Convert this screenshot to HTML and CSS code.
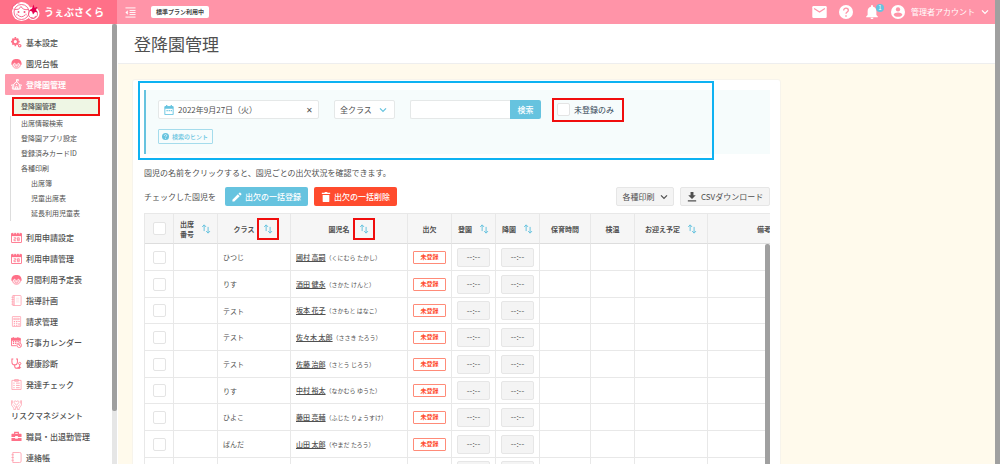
FILE: index.html
```html
<!DOCTYPE html>
<html lang="ja">
<head>
<meta charset="utf-8">
<meta name="viewport" content="width=device-width, initial-scale=1">
<title>登降園管理</title>
<link rel="stylesheet" href="styles.css">
</head>
<body>
<svg class="sprite" aria-hidden="true">
  <symbol id="i-gear" viewBox="0 0 24 24"><circle cx="9.500" cy="10" r="5.500" fill="none" stroke="currentColor" stroke-width="4"/><path d="M9.500 0v4M9.500 16v4M0 10h4M15 10h4M3 3.500l3 3M13 13.500l3 3M3 16.500l3-3M13 6.500l3-3" stroke="currentColor" stroke-width="3.500"/><circle cx="19" cy="19" r="2.700" fill="none" stroke="currentColor" stroke-width="2.600"/></symbol>
  <symbol id="i-child" viewBox="0 0 24 24"><path d="M1 12C1 5 6 2 12 2s11 3 11 10l1 2H0z" fill="currentColor"/><path d="M3 13c0 6 4 9.500 9 9.500s9-3.500 9-9.500l-5-3-4 3-4-3z" fill="#ffe3e8" stroke="currentColor" stroke-width="1.300"/><circle cx="8.500" cy="15" r="1.300" fill="currentColor"/><circle cx="15.500" cy="15" r="1.300" fill="currentColor"/><path d="M9 18.500q3 2 6 0" fill="none" stroke="currentColor" stroke-width="1.300"/></symbol>
  <symbol id="i-school" viewBox="0 0 24 24"><g fill="none" stroke="currentColor" stroke-width="2"><path d="M12 7V1h4v3h-4M6 11l6-5 6 5v11H6zM6 13H1l2 3v6h18v-6l2-3h-5M10 22v-5h4v5"/></g><circle cx="12" cy="12" r="1.500" fill="currentColor"/></symbol>
  <symbol id="i-cal" viewBox="0 0 24 24"><path d="M1 4q0-1 1-1h20q1 0 1 1v18q0 1-1 1H2q-1 0-1-1z" fill="none" stroke="currentColor" stroke-width="2"/><path d="M1 3h22v6H1z" fill="currentColor"/><path d="M6 0v5M12 0v5M18 0v5" stroke="#fff" stroke-width="1.500"/><path d="M6 12.500h4.500v3H6.500v3.500H11M14 12.500h4V19h-4zM14 15.700h4" fill="none" stroke="currentColor" stroke-width="1.600"/></symbol>
  <symbol id="i-book" viewBox="0 0 24 24"><path d="M4 1h16q2 0 2 2v18q0 2-2 2H4zM7 1v22M1 5h5M1 10h5M1 15h5M1 20h5" fill="none" stroke="currentColor" stroke-width="1.700"/><path d="M11 7h7M11 11h7M11 15h7" stroke="currentColor" stroke-width="1" opacity=".6"/></symbol>
  <symbol id="i-calc" viewBox="0 0 24 24"><rect x="3" y="1" width="18" height="22" rx="1" fill="none" stroke="currentColor" stroke-width="1.600"/><path d="M6 5h12v3H6z" fill="none" stroke="currentColor" stroke-width="1.500"/><path d="M6 12h3M11 12h3M16 12h3M6 16h3M11 16h3M6 20h3M11 20h3M17.500 15v6" stroke="currentColor" stroke-width="2.200"/></symbol>
  <symbol id="i-event" viewBox="0 0 24 24"><path d="M1 3h19v10M1 3v16h11" fill="none" stroke="currentColor" stroke-width="2"/><path d="M1 3h19v4H1zM5 0v4M15 0v4" fill="currentColor" stroke="currentColor" stroke-width="2"/><path d="M4 10h3M9 10h3M14 10h3M4 14h3M9 14h3" stroke="currentColor" stroke-width="2.500"/><circle cx="18" cy="18" r="5" fill="#fff" stroke="currentColor" stroke-width="1.800"/><path d="M15 15l6 6M18 15v3h3" fill="none" stroke="currentColor" stroke-width="1.500"/></symbol>
  <symbol id="i-steth" viewBox="0 0 24 24"><path d="M5 2H2v6c0 5 3 7 6 7s6-2 6-7V2h-3M8 15v3c0 6 11 6 11 0v-4" fill="none" stroke="currentColor" stroke-width="2.200"/><circle cx="19" cy="12" r="2.500" fill="none" stroke="currentColor" stroke-width="2"/><path d="M14 21h8M18 18v6" stroke="currentColor" stroke-width="2"/></symbol>
  <symbol id="i-check" viewBox="0 0 24 24"><path d="M2 3h20v20H2zM8 1h8v4H8z" fill="none" stroke="currentColor" stroke-width="1.700"/><path d="M5 9h3M5 14h3M5 19h3M11 9h8M11 14h8M11 19h8" stroke="currentColor" stroke-width="1.900"/></symbol>
  <symbol id="i-hands" viewBox="0 0 24 24"><path d="M12 13C5 9 6 4 9 4q2 0 3 2 1-2 3-2c3 0 4 5-3 9zM1 3v10l5 7v3h4v-5l-5-6M23 3v10l-5 7v3h-4v-5l5-6M3 3v7M21 3v7M12 15v4" fill="none" stroke="currentColor" stroke-width="1.500"/></symbol>
  <symbol id="i-case" viewBox="0 0 24 24"><path d="M8 7V3h8v4" fill="none" stroke="currentColor" stroke-width="2.500"/><path d="M2 6h20q1 0 1 1v6h-8v-2H9v2H1V7q0-1 1-1zM1 15h8v2h6v-2h8v6q0 1-1 1H2q-1 0-1-1z" fill="currentColor"/></symbol>
  <symbol id="i-note" viewBox="0 0 24 24"><path d="M4 1h15q3 0 3 3v16q0 3-3 3H4zM1 6h5M1 12h5M1 18h5" fill="none" stroke="currentColor" stroke-width="1.800"/></symbol>
  <symbol id="i-mail" viewBox="0 0 24 20"><rect width="24" height="20" rx="2" fill="currentColor"/><path d="M3 4l9 6 9-6" fill="none" stroke="#ff94a8" stroke-width="2"/></symbol>
  <symbol id="i-help" viewBox="0 0 24 24"><circle cx="12" cy="12" r="12" fill="currentColor"/><path class="cut" d="M8 9.500c0-6 8-5 8-.5 0 3-4 3-4 6" fill="none" stroke-width="2.300"/><path class="cut" d="M12 17.500v2.500" stroke-width="2.500"/></symbol>
  <symbol id="i-bell" viewBox="0 0 24 24"><path d="M12 24c1.500 0 2.500-1 2.500-2.300h-5C9.500 23 10.500 24 12 24zm7.500-7v-6.300c0-4-2-6.700-5.700-7.600V2.200C13.800 1 13 0 12 0s-1.800 1-1.800 2.200v.9c-3.600.9-5.700 3.700-5.700 7.600V17L2 19.500V21h20v-1.500z" fill="currentColor"/></symbol>
  <symbol id="i-user" viewBox="0 0 24 24"><circle cx="12" cy="12" r="12" fill="currentColor"/><circle cx="12" cy="7.500" r="3.700" fill="#ff94a8"/><path d="M4.500 16.500c1.500-5 13.500-5 15 0-3 5-12 5-15 0z" fill="#ff94a8"/></symbol>
  <symbol id="i-down" viewBox="0 0 24 24"><path d="M3 7l9 9 9-9" fill="none" stroke="currentColor" stroke-width="3.800"/></symbol>
  <symbol id="i-date" viewBox="0 0 24 24"><path d="M2 4h20v19H2z" fill="none" stroke="currentColor" stroke-width="2.200"/><path d="M2 3h20v6H2zM5 0h3v4H5zM16 0h3v4h-3zM6 12h3v3H6zM11 12h3v3h-3zM16 12h3v3h-3z" fill="currentColor"/></symbol>
  <symbol id="i-pen" viewBox="0 0 24 24"><path d="M1 18.500V23h4.500L18.500 10 14 5.500zM22.500 6c.6-.6.6-1.300 0-1.900l-2.600-2.600c-.6-.6-1.300-.6-1.900 0L15.500 4 20 8.500z" fill="currentColor"/></symbol>
  <symbol id="i-trash" viewBox="0 0 24 24"><path d="M4 7h16v15q0 2-2 2H6q-2 0-2-2zM2 2h6l1.500-2h5L16 2h6v3H2z" fill="currentColor"/></symbol>
  <symbol id="i-dl" viewBox="0 0 24 24"><path d="M8.500 0h7v8H21l-9 9-9-9h5.500zM2 20h20v3H2z" fill="currentColor"/></symbol>
  <symbol id="i-sort" viewBox="0 0 24 24"><path d="M7.500 17V3M3 7l4.500-5L12 7M17 7v14M12.500 17l4.500 5 4.500-5" fill="none" stroke="currentColor" stroke-width="2.400"/></symbol>
  <symbol id="i-menu" viewBox="0 0 24 24"><path d="M1 2h22M10 7.500h13M10 12h13M10 16.500h13M1 22h22" stroke="currentColor" stroke-width="2"/><path d="M6 7v10l-5-5z" fill="currentColor"/></symbol>
</svg>

<div class="app">
  <header class="topbar">
    <a class="logo" href="#">
      <svg class="logo-art" viewBox="0 0 60 42" aria-hidden="true">
        <circle cx="23" cy="20" r="19" fill="#fff"/><circle cx="46" cy="24" r="13" fill="#fff"/>
        <g fill="none" stroke="#f4547d" stroke-width="1.700"><circle cx="23" cy="21" r="15"/><path d="M10 16q8 2 12-6 4 8 15 6M6 16q-4-8 4-9 2-6 9-4M16 27q7 7 14 0M42 32q5 4 10-3"/><circle cx="46" cy="25" r="9"/></g>
        <circle cx="17" cy="21" r="2" fill="#f4547d"/><circle cx="29" cy="21" r="2" fill="#f4547d"/><circle cx="14" cy="26" r="2" fill="#ffacbc"/><circle cx="32" cy="26" r="2" fill="#ffacbc"/>
        <path d="M47 6l2 6 6-1-3 6 4 5-6-1-4 5-2-6-6-2 6-4z" fill="#e5004f"/>
      </svg>
      <span>うぇぶさくら</span>
    </a>
    <button class="icon-btn fold" aria-label="メニューを閉じる"><svg><use href="#i-menu"/></svg></button>
    <span class="plan">標準プラン利用中</span>
    <div class="tools">
      <button class="icon-btn mail" aria-label="メール"><svg><use href="#i-mail"/></svg></button>
      <button class="icon-btn" aria-label="ヘルプ"><svg><use href="#i-help"/></svg></button>
      <button class="icon-btn bell" aria-label="お知らせ"><svg><use href="#i-bell"/></svg><span class="count">1</span></button>
      <button class="account"><svg><use href="#i-user"/></svg><span>管理者アカウント</span><svg class="chev"><use href="#i-down"/></svg></button>
    </div>
  </header>

  <div class="body">
    <aside class="side">
      <nav class="nav">
        <a href="#"><svg><use href="#i-gear"/></svg>基本設定</a>
        <a href="#"><svg><use href="#i-child"/></svg>園児台帳</a>
        <a href="#" class="current"><svg><use href="#i-school"/></svg>登降園管理</a>
        <div class="sub">
          <a href="#" class="here marked">登降園管理</a>
          <a href="#">出席情報検索</a>
          <a href="#">登降園アプリ設定</a>
          <a href="#">登録済みカードID</a>
          <a href="#">各種印刷</a>
          <a href="#" class="deep">出席簿</a>
          <a href="#" class="deep">児童出席表</a>
          <a href="#" class="deep">延長利用児童表</a>
        </div>
        <a href="#"><svg><use href="#i-cal"/></svg>利用申請設定</a>
        <a href="#"><svg><use href="#i-cal"/></svg>利用申請管理</a>
        <a href="#"><svg><use href="#i-child"/></svg>月間利用予定表</a>
        <a href="#" class="pale"><svg><use href="#i-book"/></svg>指導計画</a>
        <a href="#" class="pale"><svg><use href="#i-calc"/></svg>請求管理</a>
        <a href="#"><svg><use href="#i-event"/></svg>行事カレンダー</a>
        <a href="#"><svg><use href="#i-steth"/></svg>健康診断</a>
        <a href="#" class="pale"><svg><use href="#i-check"/></svg>発達チェック</a>
        <a href="#" class="pale stacked"><svg><use href="#i-hands"/></svg>リスクマネジメント</a>
        <a href="#"><svg><use href="#i-case"/></svg>職員・出退勤管理</a>
        <a href="#" class="pale"><svg><use href="#i-note"/></svg>連絡帳</a>
      </nav>
      <div class="track"><div class="thumb"></div></div>
    </aside>

    <main class="main">
      <div class="heading"><h1>登降園管理</h1></div>
      <section class="card">
        <form class="filter">
          <div class="fields">
            <div class="date">
              <svg><use href="#i-date"/></svg>
              <input type="text" value="2022年9月27日（火）" aria-label="日付">
              <button type="button" aria-label="日付を消去">✕</button>
            </div>
            <div class="select">
              <select aria-label="クラス"><option>全クラス</option></select>
              <svg><use href="#i-down"/></svg>
            </div>
            <div class="search"><input type="text" aria-label="検索語"><button type="button">検索</button></div>
            <label class="only marked"><input type="checkbox"><span>未登録のみ</span></label>
          </div>
          <button type="button" class="hint"><svg><use href="#i-help"/></svg>検索のヒント</button>
        </form>
        <p class="lead">園児の名前をクリックすると、園児ごとの出欠状況を確認できます。</p>
        <div class="actions">
          <span>チェックした園児を</span>
          <button class="btn blue"><svg><use href="#i-pen"/></svg>出欠の一括登録</button>
          <button class="btn red"><svg><use href="#i-trash"/></svg>出欠の一括削除</button>
          <button class="btn gray push">各種印刷<svg class="chev"><use href="#i-down"/></svg></button>
          <button class="btn gray csv"><svg><use href="#i-dl"/></svg>CSVダウンロード</button>
        </div>
        <div class="table-wrap">
          <table>
            <colgroup><col class="w-check"><col class="w-s"><col class="w-m"><col class="w-name"><col class="w-s"><col class="w-s"><col class="w-s"><col class="w-time"><col class="w-s"><col class="w-m"><col class="w-memo"></colgroup>
            <thead>
              <tr>
                <th><input type="checkbox" aria-label="すべて選択"></th>
                <th><div class="head"><span>出席<br>番号</span><button class="sort" aria-label="出席番号で並べ替え"><svg><use href="#i-sort"/></svg></button></div></th>
                <th><div class="head wide"><span>クラス</span><button class="sort marked" aria-label="クラスで並べ替え"><svg><use href="#i-sort"/></svg></button></div></th>
                <th><div class="head wide"><span>園児名</span><button class="sort marked" aria-label="園児名で並べ替え"><svg><use href="#i-sort"/></svg></button></div></th>
                <th>出欠</th>
                <th><div class="head"><span>登園</span><button class="sort" aria-label="登園で並べ替え"><svg><use href="#i-sort"/></svg></button></div></th>
                <th><div class="head"><span>降園</span><button class="sort" aria-label="降園で並べ替え"><svg><use href="#i-sort"/></svg></button></div></th>
                <th>保育時間</th>
                <th>検温</th>
                <th><div class="head"><span>お迎え予定</span><button class="sort" aria-label="お迎え予定で並べ替え"><svg><use href="#i-sort"/></svg></button></div></th>
                <th>備考</th>
              </tr>
            </thead>
            <tbody>
              <tr><td><input type="checkbox" aria-label="國村 高嗣を選択"></td><td></td><td class="txt">ひつじ</td><td class="txt"><a href="#">國村 高嗣</a><small>（くにむら たかし）</small></td><td><button class="state">未登録</button></td><td><button class="time">--:--</button></td><td><button class="time">--:--</button></td><td></td><td></td><td></td><td></td></tr>
              <tr><td><input type="checkbox" aria-label="酒田 健永を選択"></td><td></td><td class="txt">りす</td><td class="txt"><a href="#">酒田 健永</a><small>（さかた けんと）</small></td><td><button class="state">未登録</button></td><td><button class="time">--:--</button></td><td><button class="time">--:--</button></td><td></td><td></td><td></td><td></td></tr>
              <tr><td><input type="checkbox" aria-label="坂本 花子を選択"></td><td></td><td class="txt">テスト</td><td class="txt"><a href="#">坂本 花子</a><small>（さかもと はなこ）</small></td><td><button class="state">未登録</button></td><td><button class="time">--:--</button></td><td><button class="time">--:--</button></td><td></td><td></td><td></td><td></td></tr>
              <tr><td><input type="checkbox" aria-label="佐々木 太郎を選択"></td><td></td><td class="txt">テスト</td><td class="txt"><a href="#">佐々木 太郎</a><small>（ささき たろう）</small></td><td><button class="state">未登録</button></td><td><button class="time">--:--</button></td><td><button class="time">--:--</button></td><td></td><td></td><td></td><td></td></tr>
              <tr><td><input type="checkbox" aria-label="佐藤 治郎を選択"></td><td></td><td class="txt">テスト</td><td class="txt"><a href="#">佐藤 治郎</a><small>（さとう じろう）</small></td><td><button class="state">未登録</button></td><td><button class="time">--:--</button></td><td><button class="time">--:--</button></td><td></td><td></td><td></td><td></td></tr>
              <tr><td><input type="checkbox" aria-label="中村 裕太を選択"></td><td></td><td class="txt">りす</td><td class="txt"><a href="#">中村 裕太</a><small>（なかむら ゆうた）</small></td><td><button class="state">未登録</button></td><td><button class="time">--:--</button></td><td><button class="time">--:--</button></td><td></td><td></td><td></td><td></td></tr>
              <tr><td><input type="checkbox" aria-label="藤田 亮輔を選択"></td><td></td><td class="txt">ひよこ</td><td class="txt"><a href="#">藤田 亮輔</a><small>（ふじた りょうすけ）</small></td><td><button class="state">未登録</button></td><td><button class="time">--:--</button></td><td><button class="time">--:--</button></td><td></td><td></td><td></td><td></td></tr>
              <tr><td><input type="checkbox" aria-label="山田 太郎を選択"></td><td></td><td class="txt">ぱんだ</td><td class="txt"><a href="#">山田 太郎</a><small>（やまだ たろう）</small></td><td><button class="state">未登録</button></td><td><button class="time">--:--</button></td><td><button class="time">--:--</button></td><td></td><td></td><td></td><td></td></tr>
              <tr><td></td><td></td><td></td><td></td><td></td><td><button class="time" aria-label="登園時刻"></button></td><td><button class="time" aria-label="降園時刻"></button></td><td></td><td></td><td></td><td></td></tr>
            </tbody>
          </table>
          <div class="table-bar"></div>
        </div>
        <div class="callout"></div>
      </section>
    </main>
  </div>
  <div class="page-bar"></div>
</div>
</body>
</html>
```

FILE: styles.css
```css
* { box-sizing: border-box; }
body {
  --cut: #ff94a8;
  margin: 0;
  font-family: "Noto Sans CJK JP", "Noto Sans", sans-serif;
  font-size: 8px;
  line-height: 12px;
  color: #505050;
}
button, input, select { font: inherit; color: inherit; margin: 0; }
button { padding: 0; border: 0; background: none; }
a { color: inherit; text-decoration: none; }
svg { display: block; flex: none; }
.sprite { position: absolute; width: 0; height: 0; }

.app {
  display: grid;
  grid-template: 24px minmax(0, 1fr) / minmax(0, 1fr) 5px;
  height: 100vh;
  overflow: hidden;
}
.page-bar { grid-area: 1 / 2 / 3 / 3; background: #a0a0a0; }

/* Top bar */
.topbar { display: flex; align-items: center; background: #ff94a8; color: #fff; }
.logo {
  display: flex;
  align-items: center;
  gap: 4px;
  width: 117px;
  height: 24px;
  padding-left: 10px;
  background: #ff7088;
  font-size: 10px;
  font-weight: 700;
}
.logo-art { width: 30px; height: 22px; }
.icon-btn svg { width: 14px; height: 14px; }
.fold { margin-left: 8px; }
.fold svg { width: 11px; height: 11px; }
.plan {
  margin-left: 15px;
  padding: 0 5px;
  border-radius: 2px;
  background: #fff;
  color: #444;
  font-size: 6px;
  font-weight: 700;
}
.tools { display: flex; align-items: center; gap: 12px; margin-left: auto; padding-right: 6px; }
.mail svg { width: 15px; height: 12px; }
.cut { stroke: var(--cut); }
.bell { position: relative; }
.count {
  position: absolute;
  top: -1px;
  right: -5px;
  width: 8px;
  height: 8px;
  border-radius: 4px;
  background: #66c3df;
  font-size: 6px;
  line-height: 8px;
}
.account { display: flex; align-items: center; gap: 6px; }
.account svg { width: 14px; height: 14px; }
svg.chev, .account .chev { width: 8px; height: 8px; }

.body { display: flex; min-height: 0; }

/* Sidebar */
.side { display: flex; flex: none; width: 118px; background: #fff; }
.nav { flex: 1; padding-top: 8px; font-weight: 500; }
.nav > a {
  display: flex;
  align-items: center;
  gap: 4px;
  height: 21px;
  margin: 0 8px 0 5px;
  padding-left: 6px;
  white-space: nowrap;
}
.nav > a svg { width: 11px; height: 11px; color: #ff7088; }
.nav > .pale svg { color: #ff9cab; }
.nav > .current { background: #ff9bad; color: #fff; border-radius: 1px; font-weight: 700; }
.nav > .current svg { color: #fff; }
.nav > .stacked { flex-direction: column; align-items: flex-start; gap: 0; height: 31px; padding-top: 4px; }
.sub { padding: 4px 0 6px; margin-left: 10px; font-size: 7px; font-weight: 400; }
.sub a { display: block; height: 15px; padding-left: 10px; border-left: 1px solid #ddd; line-height: 15px; }
.sub .here { height: 15px; margin: 0 14px 2px 4px; padding-left: 7px; border: 0; background: #eef6e4; font-weight: 500; }
.sub .deep { padding-left: 20px; }
.marked { outline: 2px solid #f00d0d; }
.track { width: 5px; margin-right: 1px; background: #e6e6e6; }
.thumb { height: 88%; border-radius: 2px; background: #9f9f9f; }

/* Main */
.main { flex: 1; min-width: 0; background: #fffaec; }
.heading { padding: 7px 16px; background: #fff; border-bottom: 1px solid #eee; }
h1 { margin: 0; font-size: 17px; line-height: 25px; font-weight: 400; }
.card {
  position: relative;
  margin: 15px 214px 0 14px;
  padding: 10px 10px 10px 11px;
  border: 1px solid #f7f4ec;
  border-radius: 3px;
  background: #fff;
}
.callout {
  position: absolute;
  inset: 1px 66px auto 5px;
  height: 79px;
  border: 2px solid #0eb2f2;
  pointer-events: none;
}
.filter { --cut: #fff; padding: 10px 12px; border-left: 2px solid #66c3df; background: #f6fcfc; }
.fields { display: flex; align-items: center; gap: 15px; height: 19px; margin-bottom: 10px; }
.date, .select { display: flex; flex: none; align-items: center; height: 19px; border: 1px solid #e5e8e8; border-radius: 2px; background: #fff; }
.date { width: 161px; padding: 0 5px; gap: 4px; }
.date svg { width: 10px; height: 10px; color: #66c3df; }
.date input { flex: 1; min-width: 0; padding: 0; border: 0; background: none; }
.select { position: relative; width: 61px; }
.select select { width: 100%; height: 17px; padding: 0 5px; border: 0; background: none; appearance: none; }
.select svg { position: absolute; right: 7px; width: 8px; height: 8px; color: #66c3df; pointer-events: none; }
.search { display: flex; height: 19px; }
.search input { width: 100px; border: 1px solid #e5e8e8; border-right: 0; border-radius: 2px 0 0 2px; background: #fff; }
.search button { width: 31px; border-radius: 0 2px 2px 0; background: #66c3df; color: #fff; font-weight: 500; }
.only { display: flex; align-items: center; gap: 4px; height: 20px; margin-left: -2px; padding: 0 8px 0 3px; white-space: nowrap; color: #345; }
input[type="checkbox"] {
  appearance: none;
  display: block;
  width: 13px;
  height: 13px;
  margin: 0 auto;
  border: 1px solid #e4e4e4;
  border-radius: 2px;
  background: #fff;
}
.hint { display: flex; align-items: center; gap: 3px; height: 15px; padding: 0 4px 0 3px; border: 1px solid #a5dcec; border-radius: 1px; color: #66c3df; font-size: 6px; font-weight: 500; }
.hint svg { width: 7px; height: 7px; }
.lead { margin: 13px 0 8px; }
.actions { display: flex; align-items: center; margin-bottom: 7px; white-space: nowrap; }
.btn { display: flex; align-items: center; justify-content: center; gap: 3px; height: 19px; padding: 0 6px; border-radius: 2px; font-weight: 500; }
.btn svg { width: 10px; height: 10px; }
.blue, .red { width: 83px; color: #fff; }
.blue { margin: 0 6px 0 9px; background: #66c3df; }
.red { background: #ff4b2d; }
.gray { border: 1px solid #e6e6e6; background: #f4f4f4; font-weight: 400; }
.push { width: 58px; margin: 0 6px 0 auto; gap: 5px; }
.btn .chev { width: 8px; height: 8px; }
.csv { width: 90px; gap: 4px; }

/* Attendance table */
.table-wrap { position: relative; overflow: hidden; }
table { width: 677px; table-layout: fixed; border-collapse: separate; border-spacing: 0; border-left: 1px solid #e8e8e8; font-size: 7px; line-height: 10px; }
.w-check { width: 29px; }
.w-s { width: 44px; }
.w-m { width: 73px; }
.w-name { width: 117px; }
.w-time { width: 51px; }
.w-memo { width: 113px; }
th, td { padding: 0; border-right: 1px solid #e8e8e8; border-bottom: 1px solid #e8e8e8; text-align: center; vertical-align: middle; }
th { height: 31px; border-top: 1px solid #e8e8e8; border-bottom-color: #ddd; background: #f6f6f6; font-weight: 700; }
td { height: 27px; }
tr:nth-child(3n) td { height: 26px; }
.head { display: flex; align-items: center; justify-content: center; gap: 7px; }
.head.wide { gap: 5px; padding-left: 3px; }
.sort { padding: 2px 0; }
.sort svg { width: 10px; height: 12px; color: #66c3df; }
.sort.marked { padding: 3px 4px; }
td.txt { padding-left: 5px; text-align: left; white-space: nowrap; }
td a { font-weight: 500; text-decoration: underline; }
small { font-size: 6px; }
.state { display: block; width: 33px; height: 13px; margin: 0 auto; border: 1px solid #ff8b78; border-radius: 1px; background: #fff; color: #ff4b2d; font-size: 6px; line-height: 10px; font-weight: 700; }
.time { display: block; width: 33px; height: 19px; margin: 0 auto; border: 1px solid #e6e6e6; border-radius: 2px; background: #f4f4f4; font-size: 8px; }
.table-bar { position: absolute; top: 31px; right: 0; bottom: 0; width: 5px; border-radius: 2px; background: #a0a0a0; }
```
